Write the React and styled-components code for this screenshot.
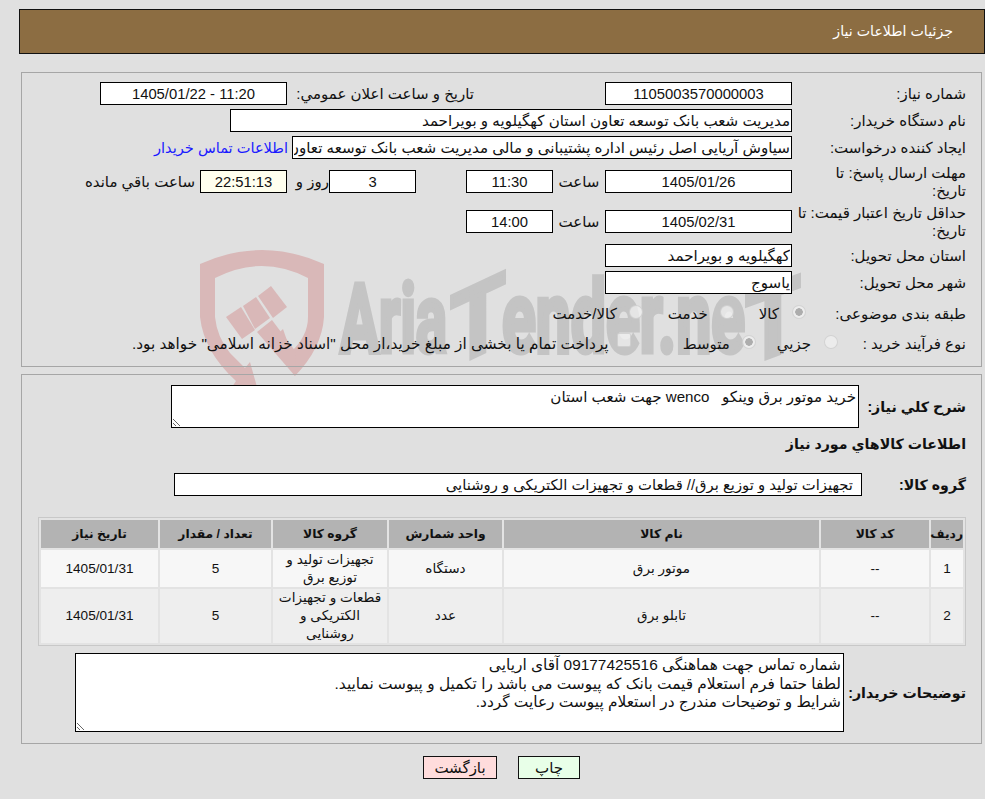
import * as React from "react"
import styled, { createGlobalStyle } from "styled-components"

const FONT = `"Liberation Sans", "DejaVu Sans", sans-serif`

const Global = createGlobalStyle`
  html, body { margin: 0; padding: 0; background: #e0e0e0; overflow: hidden; }
  body { font-family: ${FONT}; font-size: 15px; color: #111; }
`

const Watermark = () => (
  <WatermarkSvg viewBox="0 0 985 799" aria-hidden="true">
    <g fill="#d9b8b8">
      <path d="M200 264 Q262 236 324 264 L324 317 Q322 348 295 376 L271 340 L283 329 L291 352 Q308 336 308 317 L308 278 Q262 254 215 278 L215 317 Q217 337 230 353 L245 368 L250 362 L257 387 L232 387 L236 381 Q204 352 200 317 Z" />
      <path d="M226 317 L241 307 L255 330 L242 339 Z" />
      <path d="M243 306 L256 297 L270 318 L255 329 Z" />
      <path d="M258 296 L271 286 L287 307 L273 318 Z" />
      <path d="M257 332 L272 320 L296 352 L295 376 Z" />
    </g>
    <g fill="#c4c4c4" stroke="#c4c4c4" fontFamily="Roboto, sans-serif" fontWeight="700">
      <text x="340" y="352" fontSize="97" strokeWidth="5" textLength="107" lengthAdjust="spacingAndGlyphs">Aria</text>
      <text transform="translate(450 368) skewY(-25)" fontSize="100" strokeWidth="4" textLength="56" lengthAdjust="spacingAndGlyphs">T</text>
      <text x="502" y="352" fontSize="100" strokeWidth="5" textLength="243" lengthAdjust="spacingAndGlyphs">ender.ne</text>
      <text transform="translate(745 366) skewY(-20)" fontSize="100" strokeWidth="4" textLength="56" lengthAdjust="spacingAndGlyphs">T</text>
    </g>
  </WatermarkSvg>
)

const ITEMS = [
  ["1", "--", "موتور برق", "دستگاه", "تجهیزات تولید و توزیع برق", "5", "1405/01/31"],
  ["2", "--", "تابلو برق", "عدد", "قطعات و تجهیزات الکتریکی و روشنایی", "5", "1405/01/31"],
]
const HEADS = ["ردیف", "کد کالا", "نام کالا", "واحد شمارش", "گروه کالا", "تعداد / مقدار", "تاریخ نیاز"]
const WIDTHS = [32, 108, 315, 113, 114, 111, 117]

const App = () => {
  return (
    <Page>
      <Global />
      <Watermark />
      <Content dir="rtl">
        <Header>جزئیات اطلاعات نیاز</Header>

        <Panel $mt={18} $h={295} $pt={9}>
          <Row>
            <Label $w={174}>شماره نیاز:</Label>
            <Field $w={187} $center readOnly value="1105003570000003" />
            <Label $w={181} $mr={131}>تاریخ و ساعت اعلان عمومي:</Label>
            <Field $w={187} $mr={6} $center dir="ltr" readOnly value="1405/01/22 - 11:20" />
          </Row>
          <Row $mt={4}>
            <Label $w={174}>نام دستگاه خریدار:</Label>
            <Field $w={562} readOnly value="مدیریت شعب بانک توسعه تعاون استان کهگیلویه و بویراحمد" />
          </Row>
          <Row $mt={4}>
            <Label $w={174}>ایجاد کننده درخواست:</Label>
            <Field $w={500} readOnly value="سیاوش آریایی اصل رئیس اداره پشتیبانی و مالی مدیریت شعب بانک توسعه تعاون استان کهگیلویه و بویراحمد" />
            <ContactLink href="#" onClick={(e) => e.preventDefault()}>اطلاعات تماس خریدار</ContactLink>
          </Row>
          <Row $mt={11}>
            <Label $w={174}>مهلت ارسال پاسخ: تا<br />تاریخ:</Label>
            <Field $w={187} $center readOnly value="1405/01/26" />
            <Unit $w={52}>ساعت</Unit>
            <Field $w={87} $center readOnly value="11:30" />
            <Field $w={87} $mr={50} $center readOnly value="3" />
            <Unit $w={42} $pl={10}>روز و</Unit>
            <Field $w={87} $center $bg="#ffffee" readOnly value="22:51:13" />
            <Label $mr={5}>ساعت باقي مانده</Label>
          </Row>
          <Row $mt={17}>
            <Label $w={174}>حداقل تاریخ اعتبار قیمت: تا<br />تاریخ:</Label>
            <Field $w={187} $center readOnly value="1405/02/31" />
            <Unit $w={52}>ساعت</Unit>
            <Field $w={87} $center readOnly value="14:00" />
          </Row>
          <Row $mt={11}>
            <Label $w={174}>استان محل تحویل:</Label>
            <Field $w={187} readOnly value="کهگیلویه و بویراحمد" />
          </Row>
          <Row $mt={4}>
            <Label $w={174}>شهر محل تحویل:</Label>
            <Field $w={187} readOnly value="یاسوج" />
          </Row>
          <Row $mt={8}>
            <Label $w={160}>طبقه بندی موضوعی:</Label>
            <Radio type="radio" name="kind" disabled defaultChecked />
            <Label $mr={13}>کالا</Label>
            <Radio type="radio" name="kind" disabled $mr={25} />
            <Label $mr={12}>خدمت</Label>
            <Radio type="radio" name="kind" disabled $mr={25} />
            <Label $mr={12}>کالا/خدمت</Label>
          </Row>
          <Row $mt={7}>
            <Label $w={128}>نوع فرآیند خرید :</Label>
            <Radio type="radio" name="proc" disabled />
            <Label $mr={13}>جزیي</Label>
            <Radio type="radio" name="proc" disabled defaultChecked $mr={21} />
            <Label $mr={12}>متوسط</Label>
            <Check type="checkbox" disabled $mr={52} />
            <Label $mr={8} $size={15.3}>پرداخت تمام یا بخشی از مبلغ خرید،از محل "اسناد خزانه اسلامی" خواهد بود.</Label>
          </Row>
        </Panel>

        <Panel $mt={7} $h={370} $pt={10}>
          <Row $h={43}>
            <Label $w={107} $bold>شرح كلي نياز:</Label>
            <Notes $w={688} $h={43} $size={15.1} readOnly value="خرید موتور برق وینکو   wenco جهت شعب استان" />
          </Row>
          <Row $mt={4}>
            <Label $bold>اطلاعات کالاهاي مورد نیاز</Label>
          </Row>
          <Row $mt={18}>
            <Label $w={104} $bold>گروه کالا:</Label>
            <Field $w={688} $pad={8} $size={14.8} readOnly value="تجهیزات تولید و توزیع برق// قطعات و تجهیزات الکتریکی و روشنایی" />
          </Row>
          <Items>
            <colgroup>
              {WIDTHS.map((w, i) => <col key={i} width={w} />)}
            </colgroup>
            <thead>
              <tr>{HEADS.map((h) => <th key={h}>{h}</th>)}</tr>
            </thead>
            <tbody>
              {ITEMS.map((row, i) => (
                <ItemRow key={i} $h={i === 0 ? 37 : 53} $bg={i === 0 ? "#f7f7f7" : "#eeeeee"}>
                  {row.map((c, j) => <td key={j}>{c}</td>)}
                </ItemRow>
              ))}
            </tbody>
          </Items>
          <Row $h={79} $mt={7}>
            <Label $w={122} $bold>توضیحات خریدار:</Label>
            <Notes
              $w={769}
              $h={79}
              $size={15.4}
              readOnly
              value={"شماره تماس جهت هماهنگی 09177425516 آقای اریایی\nلطفا حتما فرم استعلام قیمت بانک که پیوست می باشد را تکمیل و پیوست نمایید.\nشرایط و توضیحات مندرج در استعلام پیوست رعایت گردد."}
            />
          </Row>
        </Panel>

        <Buttons>
          <Button $bg="#e8ffe8" $w={62}>چاپ</Button>
          <Button $bg="#ffdcdc" $w={74}>بازگشت</Button>
        </Buttons>
      </Content>
    </Page>
  )
}

export default App

const Page = styled.div`
  position: relative;
  width: 985px;
  height: 799px;
  overflow: hidden;
`
const WatermarkSvg = styled.svg`
  position: absolute;
  top: 0;
  left: 0;
  width: 985px;
  height: 799px;
  z-index: 0;
`
const Content = styled.div`
  position: relative;
  z-index: 1;
  padding-top: 9px;
`
const Header = styled.div`
  box-sizing: border-box;
  width: 966px;
  height: 45px;
  margin-right: 0;
  margin-left: auto;
  padding-right: 31px;
  background: #8c6d42;
  border: 1px solid #111;
  color: #fff;
  font-size: 14.2px;
  line-height: 43px;
`
const Panel = styled.div`
  box-sizing: border-box;
  width: 961px;
  height: ${(p) => p.$h}px;
  margin-top: ${(p) => p.$mt}px;
  margin-right: 3px;
  padding: ${(p) => p.$pt}px 15px 0 0;
  border: 1px solid #a6a6a6;
`
const Row = styled.div`
  display: flex;
  align-items: center;
  height: ${(p) => p.$h || 23}px;
  margin-top: ${(p) => p.$mt || 0}px;
  white-space: nowrap;
`
const Label = styled.div`
  flex: none;
  width: ${(p) => (p.$w ? `${p.$w}px` : "auto")};
  margin-right: ${(p) => p.$mr || 0}px;
  font-size: ${(p) => (p.$size ? p.$size : p.$bold ? 14.2 : 15)}px;
  font-weight: ${(p) => (p.$bold ? 700 : 400)};
  line-height: 18px;
`
const Unit = styled.div`
  flex: none;
  box-sizing: border-box;
  width: ${(p) => p.$w}px;
  padding-left: ${(p) => p.$pl || 0}px;
  text-align: center;
`
const Field = styled.input`
  flex: none;
  box-sizing: border-box;
  width: ${(p) => p.$w}px;
  height: 23px;
  margin: 0 ${(p) => p.$mr || 0}px 0 0;
  padding: 0 ${(p) => p.$pad || 1}px;
  background: ${(p) => p.$bg || "#fff"};
  border: 1px solid #000;
  border-radius: 0;
  outline: none;
  color: #111;
  font-family: ${FONT};
  font-size: ${(p) => p.$size || (p.$center ? 14.8 : 15.1)}px;
  text-align: ${(p) => (p.$center ? "center" : "right")};
`
const ContactLink = styled.a`
  margin-right: 4px;
  color: #1a1aff;
  font-size: 14.6px;
  text-decoration: none;
`
const Radio = styled.input`
  flex: none;
  appearance: none;
  box-sizing: border-box;
  width: 14px;
  height: 14px;
  margin: -4px ${(p) => p.$mr || 0}px 0 0;
  border: 1px solid rgba(190, 190, 190, 0.55);
  border-radius: 50%;
  background: rgba(240, 240, 240, 0.75);
  &:checked {
    background: radial-gradient(circle, #adadad 0 3.5px, rgba(240, 240, 240, 0.8) 4px);
  }
`
const Check = styled.input`
  flex: none;
  appearance: none;
  box-sizing: border-box;
  width: 14px;
  height: 14px;
  margin: -8px ${(p) => p.$mr || 0}px 0 0;
  border: 1px solid rgba(190, 190, 190, 0.55);
  border-radius: 2px;
  background: rgba(240, 240, 240, 0.75);
`
const Notes = styled.textarea`
  flex: none;
  box-sizing: border-box;
  width: ${(p) => p.$w}px;
  height: ${(p) => p.$h}px;
  margin: 0;
  padding: 2px;
  background: #fff;
  border: 1px solid #000;
  border-radius: 0;
  outline: none;
  overflow: hidden;
  color: #111;
  font-family: ${FONT};
  font-size: ${(p) => p.$size}px;
  line-height: 18.5px;
`
const Items = styled.table`
  table-layout: fixed;
  box-sizing: border-box;
  width: 928px;
  margin-top: 21px;
  border: 1px solid #c8c8c8;
  border-collapse: separate;
  border-spacing: 2px;
  background: #e3e3e3;

  th {
    height: 28px;
    padding: 0;
    background: #b3b3b3;
    font-size: 12.3px;
    font-weight: 700;
    white-space: nowrap;
  }
  td {
    padding: 0 2px;
    font-size: 13.6px;
    line-height: 18px;
    text-align: center;
  }
`
const ItemRow = styled.tr`
  height: ${(p) => p.$h}px;
  background: ${(p) => p.$bg};
`
const Buttons = styled.div`
  display: flex;
  justify-content: center;
  gap: 21px;
  width: 967px;
  margin-top: 12px;
`
const Button = styled.button`
  box-sizing: border-box;
  width: ${(p) => p.$w}px;
  height: 23px;
  padding: 0;
  background: ${(p) => p.$bg};
  border: 1px solid #111;
  border-radius: 0;
  color: #111;
  font-family: ${FONT};
  font-size: 15px;
`
